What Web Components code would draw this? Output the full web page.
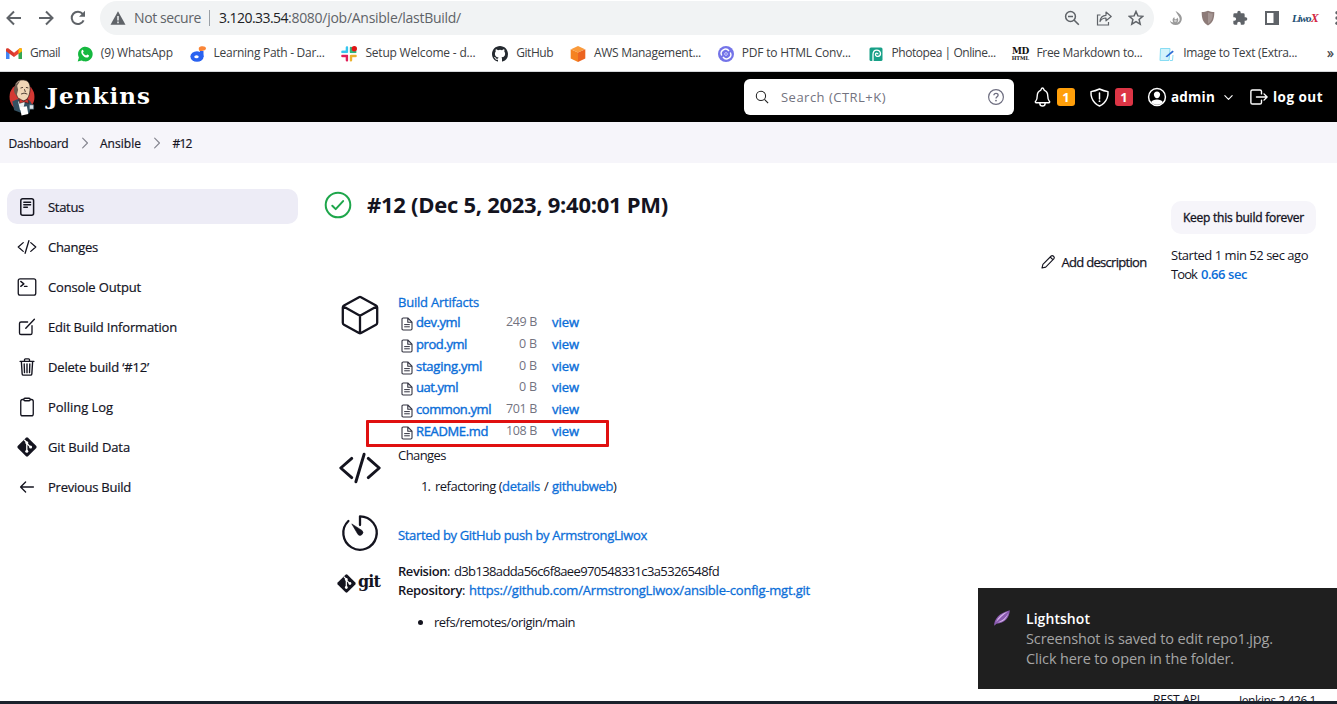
<!DOCTYPE html>
<html lang="en">
<head>
<meta charset="utf-8">
<title>Ansible #12 [Jenkins]</title>
<style>
html,body{margin:0;height:704px;overflow:hidden;background:#fff}
body{font:13px/20px "Open Sans","Noto Sans",sans-serif;color:#14141f}
</style>
</head>
<body>
<build-page></build-page>
<script>
const ICONS = {
back:['0 0 16 16','<path d="M15 8H2M8 1.5 1.5 8 8 14.5" fill="none" stroke="currentColor" stroke-width="2"/>'],
fwd:['0 0 16 16','<path d="M1 8h13M8 1.5 14.500 8 8 14.5" fill="none" stroke="currentColor" stroke-width="2"/>'],
reload:['0 0 16 16','<path d="M13.600 10.300A6.200 6.200 0 1 1 12.700 3.900L14 5.200" fill="none" stroke="currentColor" stroke-width="2"/><path d="M15 .8v6H9z" fill="currentColor"/>'],
warn:['0 0 16 16','<path d="M8 1.200 15.500 14.800H.5z" fill="currentColor"/><path d="M8 6v4.500M8 11.600v1.600" stroke="#f1f3f4" stroke-width="1.500"/>'],
zoomout:['0 0 16 16','<circle cx="6.500" cy="6.500" r="4.900" fill="none" stroke="currentColor" stroke-width="1.500"/><path d="M4 6.500h5M10 10l4.800 4.800" stroke="currentColor" stroke-width="1.600"/>'],
share:['0 0 16 16','<path d="M4.500 5H1.500v10h11v-3" fill="none" stroke="currentColor" stroke-width="1.200"/><path d="M4 11.500c.4-4.200 2.600-6 6-6.200V2L15.200 6.500 10 10.800V8C7.200 8 5.400 9 4 11.500z" fill="none" stroke="currentColor" stroke-width="1.200" stroke-linejoin="round"/>'],
star:['0 0 16 16','<path d="m8 1.500 1.900 4.400 4.800.4-3.600 3.200 1.100 4.700L8 11.700l-4.200 2.500 1.100-4.700L1.300 6.300l4.800-.4z" fill="none" stroke="currentColor" stroke-width="1.500"/>'],
flame:['0 0 16 16','<path d="M7.500 1c4 2 7.200 5 6.200 9-.7 3-3 5-6 5C4.500 15 2.200 13 1.800 10.200c1 1.500 2.200 2.200 3.500 2.300C4 10 4.500 8 6.500 7c-.3 1.200 0 2 1 2.200 1 .1 1.600-.7 1.500-1.700 2 1.500 1.600 4.500-.5 5.300 3-.4 3.600-2.800 2.900-5C10.700 5.500 9 4 7.500 1z" fill="#9a9a9a"/><circle cx="7.400" cy="10.800" r="1.400" fill="#ccc"/>'],
shieldx:['0 0 16 16','<path d="M8 .8c2 .9 4 1.200 6.300 1.200 0 6-1 10.500-6.300 13.500C2.700 12.500 1.700 8 1.700 2 4 2 6 1.700 8 .8z" fill="#8d7b78"/><path d="M8 2.500c1.500.6 3 1 4.800 1-.1 5-1.300 8-4.800 10.300z" fill="#a59693"/>'],
puzzle:['0 0 24 24','<path d="M20.500 11H19V7a2 2 0 0 0-2-2h-4V3.500a2.500 2.500 0 0 0-5 0V5H4a2 2 0 0 0-2 2v3.800h1.500a2.700 2.700 0 0 1 0 5.400H2V20c0 1.100.9 2 2 2h3.800v-1.500a2.700 2.700 0 0 1 5.400 0V22H17a2 2 0 0 0 2-2v-4h1.500a2.500 2.500 0 0 0 0-5z" fill="currentColor"/>'],
panel:['0 0 16 16','<path d="M1 1h14v14H1zM3 3v10h6.500V3z" fill="currentColor" fill-rule="evenodd"/>'],
dots:['0 0 4 16','<circle cx="2" cy="2.800" r="1.700" fill="currentColor"/><circle cx="2" cy="8" r="1.700" fill="currentColor"/><circle cx="2" cy="13.200" r="1.700" fill="currentColor"/>'],
gmail:['0 0 16 12','<path d="M0 1.500V11h3.500V4z" fill="#4285f4"/><path d="M16 1.500V11h-3.500V4z" fill="#34a853"/><path d="M0 1.500C0 .3 1.500-.3 2.600.6L8 4.700V9L0 3.200z" fill="#d93a2e"/><path d="M16 1.500c0-1.200-1.500-1.800-2.600-.9L8 4.700V9l8-5.800z" fill="#ea4335"/><path d="M12.500 1.300 13.400.6C14.500-.3 16 .3 16 1.500v1.700l-3.500 2.500z" fill="#fbbc04"/>'],
whatsapp:['0 0 16 16','<path d="M.7 15.500 1.900 11.500A7.300 7.300 0 1 1 4.700 14.400z" fill="#15b83f"/><path d="M5.100 4c.6-.4 1 0 1.500 1.300.2.600-.5 1-.6 1.400.7 1.400 1.700 2.300 3.100 2.800.4-.1.800-1 1.200-.9 1.700.7 1.900.9 1.600 1.700-.8 2-3.700 1.400-5.500-.3C4.500 8.400 3.500 5.500 5.100 4z" fill="#fff"/>'],
dare:['0 0 16 16','<ellipse cx="7" cy="10.500" rx="6.600" ry="5.300" fill="#2a62f0"/><path d="M10 5h3.500v6H10z" fill="#2a62f0"/><ellipse cx="6.500" cy="10.700" rx="2.200" ry="1.500" fill="#fff"/><path d="M9 1.500C10.500-.5 16-.3 16 2.200S12 5 10 5C8.800 4.600 8.500 2.500 9 1.500z" fill="#fa8638"/>'],
slack:['0 0 16 16','<g stroke-width="2.600" stroke-linecap="round"><path d="M6 1.500v4.300M1.500 5.900H5.500" stroke="#36c5f0"/><path d="M9.900 5.900h4.300M9.900 2v4" stroke="#2eb67d"/><path d="M1.500 9.900H5M6 9.900v4.300" stroke="#e01e5a"/><path d="M10.500 9.900h4M9.900 10v4.200" stroke="#ecb22e"/></g><path d="M0 7.900h16M7.950 0v16" stroke="#fff" stroke-width="1.200"/><path d="M0 3.800h4M12 12.100h4M3.700 12.200H0" stroke="#fff" stroke-width=".5"/><circle cx="13.300" cy="2.700" r="2.700" fill="#e01515"/>'],
github:['0 0 16 16','<path fill="#24292f" d="M8 0C3.580 0 0 3.580 0 8c0 3.540 2.290 6.530 5.470 7.590.4.070.55-.17.55-.38 0-.19-.01-.82-.01-1.490-2.010.37-2.530-.49-2.690-.94-.09-.23-.48-.94-.82-1.130-.28-.15-.68-.52-.01-.53.630-.01 1.080.58 1.230.82.720 1.210 1.870.87 2.330.66.070-.52.280-.87.510-1.070-1.780-.2-3.640-.89-3.640-3.950 0-.87.310-1.590.82-2.150-.08-.2-.36-1.020.08-2.120 0 0 .67-.21 2.200.82a7.600 7.600 0 0 1 4 0c1.530-1.040 2.200-.82 2.200-.82.440 1.100.16 1.920.08 2.120.51.560.82 1.270.82 2.150 0 3.070-1.870 3.750-3.650 3.950.29.250.54.730.54 1.480 0 1.070-.01 1.930-.01 2.200 0 .21.150.46.550.38A8 8 0 0 0 16 8c0-4.420-3.580-8-8-8z"/>'],
aws:['0 0 16 16','<path d="M8 0 15 3.200 8 6.500 1 3.200z" fill="#fa9a3a"/><path d="M.7 3.200 8 6.500V16L.7 12.500z" fill="#f58220"/><path d="M15.300 3.200 8 6.500V16l7.300-3.500z" fill="#ec6420"/>'],
pdf:['0 0 16 16','<circle cx="8" cy="8" r="8" fill="#7474e8"/><path d="M3.700 9.500A4.300 4.300 0 0 1 11 5M12.300 6.500A4.300 4.300 0 0 1 5 11" fill="none" stroke="#fff" stroke-width="1.400"/><circle cx="8" cy="8" r="1.400" fill="none" stroke="#c9c9fa" stroke-width="1"/>'],
pea:['0 0 16 16','<rect x="1.500" y="1.500" width="13" height="13.500" rx="1.500" fill="#18a087"/><path d="M5 15V8.500C5 2.500 12.500 3 12.500 7.600c0 3.600-5 3.600-5 .8 0-1.700 2.400-1.700 2.400-.1" fill="none" stroke="#fff" stroke-width="1.300"/>'],
note:['0 0 16 16','<path d="M1.500 2.500h9.500l-1 12H1z" fill="#d3f3fb" stroke="#87dcf3" stroke-width="1"/><path d="M11 14.500h2.500L14 9" fill="none" stroke="#87dcf3"/><path d="M6.500 10.500 13.500 4.500l1.300 1.200-6.800 5.500z" fill="#2c6bd4"/>'],
search:['0 0 16 16','<circle cx="6.800" cy="6.800" r="5.300" fill="none" stroke="#222" stroke-width="1.200"/><path d="m10.800 10.800 4.200 4.200" stroke="#222" stroke-width="1.300"/>'],
help:['0 0 16 16','<circle cx="8" cy="8" r="7.400" fill="none" stroke="#6e6e80" stroke-width="1.200"/><path d="M5.900 6.200C6 3.600 10.200 3.700 10.100 6.200c0 1.500-2.100 1.600-2.100 3.300" fill="none" stroke="#6e6e80" stroke-width="1.300"/><circle cx="8" cy="11.600" r=".9" fill="#6e6e80"/>'],
bell:['0 0 512 512','<path d="M427.700 351.400C404 322 383.900 307.800 383.900 213 383.900 126 340 95 303.700 80c-4.800-2-9.300-6.500-10.800-11.500C286.500 46.800 268.600 24 256 24s-30.500 22.800-36.900 44.500c-1.500 5-6 9.600-10.800 11.500C172 95 128 126 128 213c0 94.900-20 109.200-43.700 138.400C74.500 363.500 83.200 384 100.400 384h311.300c17.100 0 25.700-20.600 16-32.600zM320 384v16a64 64 0 0 1-128 0v-16" fill="none" stroke="currentColor" stroke-linecap="round" stroke-linejoin="round" stroke-width="34"/>'],
shield:['0 0 512 512','<path d="M463.100 112.400C373.700 96.700 336.700 84.500 256 48c-80.700 36.500-117.700 48.700-207.100 64.400C32.700 369.100 240.600 457.800 256 464c15.400-6.200 223.300-94.900 207.100-351.600zM256 144v146" fill="none" stroke="currentColor" stroke-linecap="round" stroke-linejoin="round" stroke-width="36"/><circle cx="256" cy="345" r="23" fill="currentColor"/>'],
user:['0 0 512 512','<circle cx="256" cy="256" r="216" fill="none" stroke="currentColor" stroke-width="38"/><path d="M256 115c-48 0-84 36-80 86 4 49 40 88 80 88s76-39 80-88c4-51-32-86-80-86zM105 390c40-95 262-95 302 0-70 82-232 82-302 0z" fill="currentColor"/>'],
chevd:['0 0 512 512','<path d="m112 184 144 144 144-144" fill="none" stroke="currentColor" stroke-linecap="round" stroke-linejoin="round" stroke-width="44"/>'],
chevr:['0 0 512 512','<path d="m170 80 176 176-176 176" fill="none" stroke="currentColor" stroke-linecap="round" stroke-linejoin="round" stroke-width="42"/>'],
logout:['0 0 512 512','<path d="M320 176v-60a40 40 0 0 0-40-40H88a40 40 0 0 0-40 40v280a40 40 0 0 0 40 40h192a40 40 0 0 0 40-40v-60M384 176l80 80-80 80M191 256h273" fill="none" stroke="currentColor" stroke-linecap="round" stroke-linejoin="round" stroke-width="36"/>'],
status:['0 0 20 20','<rect x="3.800" y="1.800" width="12.800" height="16.500" rx="2" fill="none" stroke="currentColor" stroke-width="1.500"/><path d="M6.800 5.200h6.800M6.800 7.700h6.800M6.800 10.200h3.600" stroke="currentColor" stroke-width="1.400" stroke-linecap="round"/>'],
code:['0 0 512 512','<path d="M160 368 32 256l128-112M352 368l128-112-128-112M304 96l-96 320" fill="none" stroke="currentColor" stroke-linecap="round" stroke-linejoin="round" stroke-width="34"/>'],
term:['0 0 512 512','<rect x="32" y="48" width="448" height="416" rx="48" fill="none" stroke="currentColor" stroke-width="34"/><path d="m96 112 80 64-80 64M192 240h64" fill="none" stroke="currentColor" stroke-linecap="round" stroke-linejoin="round" stroke-width="34"/>'],
edit:['0 0 512 512','<path d="M384 224v184a40 40 0 0 1-40 40H104a40 40 0 0 1-40-40V168a40 40 0 0 1 40-40h167.500" fill="none" stroke="currentColor" stroke-linecap="round" stroke-linejoin="round" stroke-width="34"/><path d="m225 287 220-228" stroke="currentColor" stroke-linecap="round" stroke-width="36"/>'],
trash:['0 0 512 512','<path d="m112 112 20 320c1 18.500 14.400 32 32 32h184c17.700 0 30.900-13.500 32-32l20-320M80 112h352M192 112V72c0-13 10-24 24-24h80c14 0 24 11 24 24v40M256 176v224M184 176l8 224M328 176l-8 224" fill="none" stroke="currentColor" stroke-linecap="round" stroke-linejoin="round" stroke-width="35"/>'],
clip:['0 0 512 512','<path d="M336 64h32a48 48 0 0 1 48 48v320a48 48 0 0 1-48 48H144a48 48 0 0 1-48-48V112a48 48 0 0 1 48-48h32" fill="none" stroke="currentColor" stroke-linejoin="round" stroke-width="34"/><rect x="176" y="32" width="160" height="64" rx="26" fill="none" stroke="currentColor" stroke-width="34"/>'],
git:['0 0 20 20','<path d="M9 .7Q10 0 11 .7L19.300 9q.7 1 0 2L11 19.300q-1 .7-2 0L.7 11Q0 10 .7 9z" fill="currentColor"/><path d="M7.200 2.800 9.800 5.600V14M10 6.500l3.500 3.600" fill="none" stroke="#fff" stroke-width="1.300"/><circle cx="9.800" cy="5.800" r="1.500" fill="#fff"/><circle cx="9.800" cy="14.200" r="1.500" fill="#fff"/><circle cx="13.600" cy="10" r="1.500" fill="#fff"/>'],
left:['0 0 512 512','<path d="M220 128 92 256l128 128M104 256h316" fill="none" stroke="currentColor" stroke-linecap="round" stroke-linejoin="round" stroke-width="34"/>'],
ok:['0 0 28 28','<circle cx="14" cy="14" r="12.300" fill="none" stroke="#1ea64b" stroke-width="2"/><path d="m8.300 14.700 3.400 3.400 7.400-8" fill="none" stroke="#1ea64b" stroke-width="2" stroke-linecap="round" stroke-linejoin="round"/>'],
pencil:['0 0 16 16','<path d="M2 14l.9-3.700L11.200 2c1.300-1.300 4 1 2.800 2.700l-8.300 8.400zM10.200 3l2.900 2.900" fill="none" stroke="currentColor" stroke-width="1.100" stroke-linejoin="round"/>'],
cube:['0 0 40 40','<path d="M19 2.200q1-.5 2 0l15 8.300q1.200.7 1.200 2v15.200q0 1.300-1.200 2l-15 8.300q-1 .5-2 0L4 29.700q-1.200-.7-1.200-2V12.500q0-1.300 1.200-2zM3.500 11.500 20 20.700l16.500-9.200M20 20.700V38" fill="none" stroke="currentColor" stroke-width="2.300" stroke-linejoin="round"/>'],
doc:['0 0 12 14','<path d="M1 2.200Q1 1 2.200 1h4.600L11 5.200v6.600q0 1.200-1.200 1.200H2.200Q1 13 1 11.800zM6.800 1v4.200H11" fill="none" stroke="#333340" stroke-width="1.100" stroke-linejoin="round"/><path d="M3.200 7.600h5.600M3.200 9.800h5.600" stroke="#333340" stroke-width="1"/>'],
timer:['0 0 40 40','<path d="M20 12V3.300A16.700 16.700 0 1 1 8.400 8" fill="none" stroke="currentColor" stroke-width="2.300" stroke-linecap="round" stroke-linejoin="round"/><path d="M11.800 10.900 22 17.500a2.800 2.800 0 1 1-4 4z" fill="currentColor" stroke="currentColor" stroke-width=".6" stroke-linejoin="round"/>'],
feather:['0 0 18 18','<path d="M1.200 16.800C1 10 6 4 16.800 1.200 16.500 9 11.500 14 3.500 14.800z" fill="#8a5bb0"/><path d="M3 13C5 8 9 4.500 15 2.500 10 6 7 9 3 13zM4.500 13.500C9 12 13 8.500 15.500 4 13.500 10 10 13.200 4.500 13.500z" fill="#d9b6ec"/>'],
jenkins:['0 0 28 38','<ellipse cx="14" cy="18.500" rx="12.800" ry="14" fill="#d33833"/><path d="M4 23Q12 18 22 22l3.500 6-3 3-1 4Q14 36 6 32z" fill="#335061"/><path d="M10 23h7l-2 9h-3z" fill="#eef1f2"/><path d="M7 8C7 2.500 11 .8 15.500 1c5 .3 7 4 6.800 9-.2 6-2 11-6 12.500-4 .5-6.500-2.500-7.800-6z" fill="#f0d6b7" stroke="#2a2020" stroke-width=".7"/><path d="M7 7C4.500 10 6 15.500 8.500 17L10 11 9 7l3-5Q8.500 3 7 7z" fill="#6c5a4f"/><path d="M12.500 9.300 15 8.600M18 8.600l2.500.6M13 15.500q3-2 6.500 0M16.500 10.500l1 3" fill="none" stroke="#3a2a25" stroke-width=".9"/><path d="m11 20 4.500 2.500L20 20.500l1 4.500-5-1.500-4.500 1.500z" fill="#d33833" stroke="#20100f" stroke-width=".5"/><path d="M12 29l7-1 1.500 8-7 1.500z" fill="#fff"/><path d="M21.500 26.500h4.500v4.500h-4.500z" fill="#dce4e8" stroke="#335061" stroke-width=".6"/>']
};

/* <ui-icon name size h>: one vector glyph */
customElements.define('ui-icon', class extends HTMLElement {
  connectedCallback() {
    if (this.shadowRoot) return;
    const [vb, body] = ICONS[this.getAttribute('name')];
    const w = this.getAttribute('size') || 16, h = this.getAttribute('h') || w;
    this.attachShadow({mode:'open'}).innerHTML =
      `<style>:host{display:inline-flex;flex:none}svg{display:block}</style><svg width="${w}" height="${h}" viewBox="${vb}">${body}</svg>`;
  }
});

class Base extends HTMLElement {
  connectedCallback() {
    if (this.shadowRoot) return;
    const t = document.createElement('template');
    t.innerHTML = '<style>*{box-sizing:border-box}' + this.css + '</style>' + this.view();
    this.attachShadow({mode:'open'}).append(document.importNode(t.content, true));
  }
}

customElements.define('browser-bar', class extends Base {
  css = `:host{display:block;height:72px;flex:none;background:#fff;color:#5f6368;border-bottom:1px solid #d5d7da;box-sizing:border-box;overflow:hidden;font-family:"Open Sans",sans-serif}
  .tools{display:flex;align-items:center;height:36px;padding-left:6px;width:1345px}
  .nav{display:flex;gap:16px;width:94px}
  .omni{display:flex;align-items:center;width:1054px;height:34px;border-radius:17px;background:#f1f3f4;padding:0 10px 0 10px;font-size:14px}
  .sep{width:1px;height:16px;background:#9aa0a6;margin:0 9px 0 8px}
  .host{color:#202124}.acts{margin-left:auto;display:flex;gap:16px}
  .ext{display:flex;align-items:center;gap:16px;margin-left:14px}
  .lx{font:italic bold 11px/16px "Liberation Serif",serif;color:#1c4f73;width:24px;margin:0 -4px;letter-spacing:-1px}.lx b{color:#d32440;font-size:12px}
  .marks{display:flex;align-items:center;height:35px;padding-left:6px;gap:16.800px;font-size:12px;color:#3c4043}
  .m{display:flex;align-items:center;gap:8px;flex:none}.m ui-text,.more{margin-top:-2px}
  .more{margin-left:13px;font-size:14px;-webkit-text-stroke:.3px}
  .md{width:16px;display:flex;flex-direction:column;align-items:center;color:#111;font:900 9px/8px "DejaVu Serif",serif;letter-spacing:-.5px}.md small{font:bold 5px/6px "DejaVu Serif",serif;letter-spacing:0}`;
  view() {
    const m = [['gmail','Gmail',30],['whatsapp','(9) WhatsApp',72],['dare','Learning Path - Dar...',111],['slack','Setup Welcome - d...',110],['github','GitHub',37],['aws','AWS Management...',107],['pdf','PDF to HTML Conv...',109],['pea','Photopea | Online...',104],['','Free Markdown to...',106],['note','Image to Text (Extra...',114]];
    return `<div class="tools"><div class="nav"><ui-icon name="back"></ui-icon><ui-icon name="fwd"></ui-icon><ui-icon name="reload"></ui-icon></div>
    <div class="omni"><ui-icon name="warn"></ui-icon><ui-text w="67" style="margin-left:8px">Not secure</ui-text><span class="sep"></span><ui-text class="host" w="69">3.120.33.54</ui-text><ui-text w="173">:8080/job/Ansible/lastBuild/</ui-text>
    <span class="acts"><ui-icon name="zoomout"></ui-icon><ui-icon name="share"></ui-icon><ui-icon name="star"></ui-icon></span></div>
    <div class="ext"><ui-icon name="flame"></ui-icon><ui-icon name="shieldx"></ui-icon><ui-icon name="puzzle"></ui-icon><ui-icon name="panel"></ui-icon><span class="lx">Liwo<b>X</b></span><ui-icon name="dots" size="4" h="16" style="margin-left:7px"></ui-icon></div></div>
    <div class="marks">${m.map(([i,t,w]) => `<span class="m">${i ? `<ui-icon name="${i}" ${i=='gmail'?'size="16" h="12"':''}></ui-icon>` : '<span class="md">MD<small>HTML</small></span>'}<ui-text w="${w}">${t}</ui-text></span>`).join('')}<span class="more">»</span></div>`;
  }
});

customElements.define('jenkins-header', class extends Base {
  css = `:host{display:flex;align-items:center;height:50px;flex:none;background:#000;color:#fff;padding-left:8px}
  .logo{font:bold 23px/30px "DejaVu Serif",serif;margin-left:11px;margin-top:-3px}
  .search{display:flex;align-items:center;width:270px;height:36px;border-radius:6px;background:#fff;color:#737380;margin-left:593px;padding:0 10px 0 11px;font-size:13px}
  .search ui-icon:last-child{margin-left:auto}
  .badge{width:18px;height:18px;border-radius:3px;background:#ff9f0a;font-weight:700;font-size:13px;line-height:18px;text-align:center}
  .red{background:#dc3545}.b{font-weight:700;font-size:13.500px}`;
  view() { return `<ui-icon name="jenkins" size="28" h="37"></ui-icon><ui-text class="logo" w="104">Jenkins</ui-text>
    <div class="search"><ui-icon name="search" size="14"></ui-icon><ui-text w="105" style="margin-left:12px">Search (CTRL+K)</ui-text><ui-icon name="help" size="16"></ui-icon></div>
    <ui-icon name="bell" size="21" style="margin-left:18px"></ui-icon><span class="badge" style="margin-left:4px">1</span>
    <ui-icon name="shield" size="21" style="margin-left:14px"></ui-icon><span class="badge red" style="margin-left:5px">1</span>
    <ui-icon name="user" size="20" style="margin-left:14px"></ui-icon><ui-text class="b" w="44" style="margin-left:4px">admin</ui-text><ui-icon name="chevd" size="13" style="margin-left:7px"></ui-icon>
    <ui-icon name="logout" size="20" style="margin-left:14px"></ui-icon><ui-text class="b" w="50" style="margin-left:4px">log out</ui-text>`; }
});

customElements.define('bread-crumbs', class extends Base {
  css = `:host{display:flex;align-items:center;height:41px;flex:none;background:#f6f5fa;padding:1px 0 0 8.500px;box-sizing:border-box;font-size:12px;-webkit-text-stroke:.2px}
  ui-text{margin-top:1px}ui-icon{color:#85858f;margin:0 8.500px 0 9px}`;
  view() { return `<ui-text w="60">Dashboard</ui-text><ui-icon name="chevr" size="14"></ui-icon><ui-text w="41">Ansible</ui-text><ui-icon name="chevr" size="14"></ui-icon><ui-text w="19">#12</ui-text>`; }
});

customElements.define('side-task', class extends Base {
  css = `:host{display:flex;align-items:center;height:35px;border-radius:10px;padding-left:10px;font-size:13px;-webkit-text-stroke:.2px;box-sizing:border-box}
  :host([active]){background:#edecf6}ui-icon{margin-right:11px}slot{display:contents}.t{padding-top:1px}`;
  view() { return `<ui-icon name="${this.getAttribute('icon')}" size="20"></ui-icon><span class="t"><slot></slot></span>`; }
});

customElements.define('task-list', class extends Base {
  css = `:host{display:flex;flex-direction:column;gap:5px;width:298px;flex:none;padding:26px 0 0 7px;box-sizing:border-box}`;
  view() { return [['status','Status',36],['code','Changes',50],['term','Console Output',93],['edit','Edit Build Information',129],['trash','Delete build ‘#12’',101],['clip','Polling Log',65],['git','Git Build Data',82],['left','Previous Build',83]]
    .map(([i,t,w],n) => `<side-task icon="${i}" ${n?'':'active'}><ui-text w="${w}">${t}</ui-text></side-task>`).join(''); }
});

customElements.define('build-heading', class extends Base {
  css = `:host{display:flex;height:129px;padding-left:26px;box-sizing:border-box}
  ui-icon.ok{margin-top:28px}.title{font-size:22px;line-height:30px;font-weight:700;margin:26px 0 0 15px}
  .add{display:flex;align-items:center;height:20px;margin:89px 0 0 auto;-webkit-text-stroke:.25px}
  .meta{width:145px;margin:38px 21px 0 24.500px}
  .keep{height:33px;border-radius:10px;background:#f6f5fa;display:flex;align-items:center;justify-content:center;font-size:12px;-webkit-text-stroke:.35px;margin-bottom:12px}
  .l{display:flex;height:19px;line-height:19px}.a{color:#0b6ed8;font-weight:600}`;
  view() { return `<ui-icon class="ok" name="ok" size="28"></ui-icon><ui-text class="title" w="301">#12 (Dec 5, 2023, 9:40:01 PM)</ui-text>
    <div class="add"><ui-icon name="pencil" size="16"></ui-icon><ui-text w="85" style="margin-left:6px">Add description</ui-text></div>
    <div class="meta"><div class="keep"><ui-text w="121">Keep this build forever</ui-text></div>
    <div class="l"><ui-text w="137">Started 1 min 52 sec ago</ui-text></div><div class="l"><ui-text w="26">Took</ui-text><ui-text class="a" w="46" style="margin-left:4px">0.66 sec</ui-text></div></div>`; }
});

customElements.define('artifact-row', class extends Base {
  css = `:host{display:flex;align-items:center;height:21.670px;padding-left:3px}
  ui-icon{margin:3px 3px 0 0}ui-text{margin-top:-1px}.n,.v{color:#0b6ed8;-webkit-text-stroke:.4px}.s{width:121px;display:flex;justify-content:space-between;margin-right:15px;color:#73737f;font-size:12.500px}.n{font-size:13px}`;
  view() { const g = k => this.getAttribute(k);
    return `<ui-icon name="doc" size="12" h="14"></ui-icon><span class="s"><ui-text class="n" w="${g('nw')}">${g('file')}</ui-text><ui-text w="${g('sw')}">${g('size')}</ui-text></span><ui-text class="v" w="27">view</ui-text>`; }
});

customElements.define('build-summary', class extends Base {
  css = `:host{display:block;padding-left:38px;position:relative}
  section{display:grid;grid-template-columns:44px 1fr;column-gap:18px}
  section>ui-icon{justify-self:center;position:relative;left:1.500px}
  .a{color:#0b6ed8;-webkit-text-stroke:.3px}.l{display:flex;align-items:center}
  .mark{position:absolute;left:68px;top:128px;width:243px;height:27px;border:3px solid #e01010;border-radius:1px}
  .gi{display:flex;align-items:center;height:22px;padding-left:1px}.gi ui-text{font:bold 16px/20px "DejaVu Serif",serif;margin:-2px 0 0 2px}
  .dot{width:5px;height:5px;border-radius:50%;background:#14141f;margin:0 11px 0 20px}`;
  view() {
    const f = [['dev.yml',44,'249 B',31],['prod.yml',51,'0 B',18],['staging.yml',66,'0 B',18],['uat.yml',42,'0 B',18],['common.yml',75,'701 B',31],['README.md',72,'108 B',31]];
    return `<section style="height:150px"><ui-icon name="cube" size="40" style="margin-top:3px"></ui-icon><div><div class="l"><ui-text class="a" w="81">Build Artifacts</ui-text></div>
      ${f.map(a => `<artifact-row file="${a[0]}" nw="${a[1]}" size="${a[2]}" sw="${a[3]}"></artifact-row>`).join('')}</div></section>
    <section style="height:61px"><ui-icon name="code" size="44" style="margin-top:4px"></ui-icon><div><div class="l" style="height:26px"><ui-text w="48">Changes</ui-text></div>
      <div class="l" style="height:36px;padding-left:23px"><ui-text w="9">1.</ui-text><ui-text w="67" style="margin-left:5px">refactoring (</ui-text><ui-text class="a" w="38">details</ui-text><ui-text w="4" style="margin:0 4px">/</ui-text><ui-text class="a" w="61">githubweb</ui-text><ui-text w="4">)</ui-text></div></div></section>
    <section style="height:58px"><ui-icon name="timer" size="40" style="margin-top:10px"></ui-icon><div class="l" style="height:20px;margin-top:22px"><ui-text class="a" w="249">Started by GitHub push by ArmstrongLiwox</ui-text></div></section>
    <section><div class="gi" style="margin-top:11px"><ui-icon name="git" size="19"></ui-icon><ui-text w="22">git</ui-text></div><div>
      <div class="l" style="height:19px"><ui-text w="49" style="font-weight:600">Revision</ui-text><ui-text w="4">:</ui-text><ui-text w="265" style="margin-left:3px">d3b138adda56c6f8aee970548331c3a5326548fd</ui-text></div>
      <div class="l" style="height:19px"><ui-text w="64" style="font-weight:600">Repository</ui-text><ui-text w="4">:</ui-text><ui-text class="a" w="341" style="margin-left:3px">https://github.com/ArmstrongLiwox/ansible-config-mgt.git</ui-text></div>
      <div class="l" style="height:20px;margin-top:13px"><i class="dot"></i><ui-text w="141">refs/remotes/origin/main</ui-text></div></div></section>
    <div class="mark"></div>`;
  }
});

customElements.define('toast-card', class extends Base {
  css = `:host{position:absolute;left:978px;top:588px;width:359px;height:101px;background:#1f1f1f;color:#a5a5a5;display:flex;padding:21px 0 0 15px;box-sizing:border-box;font-size:14.500px}
  .t{display:flex;flex-direction:column;margin-left:15px}.h{color:#fff;font-weight:600;font-size:14px}`;
  view() { return `<ui-icon name="feather" size="18"></ui-icon><div class="t"><ui-text class="h" w="64">Lightshot</ui-text><ui-text w="247">Screenshot is saved to edit repo1.jpg.</ui-text><ui-text w="208">Click here to open in the folder.</ui-text></div>`; }
});

customElements.define('build-page', class extends Base {
  css = `:host{display:flex;flex-direction:column;width:1337px;height:704px;overflow:hidden;position:relative}
  main{display:flex;height:527px;flex:none}.c{flex:1}
  footer{display:flex;height:11px;overflow:hidden;padding-left:1153px;font-size:12px;flex:none}
  .task{height:3px;flex:none;background:#1b222c}`;
  view() { return `<browser-bar></browser-bar><jenkins-header></jenkins-header><bread-crumbs></bread-crumbs>
    <main><task-list></task-list><div class="c"><build-heading></build-heading><build-summary></build-summary></div></main>
    <footer><ui-text w="47">REST API</ui-text><ui-text w="77" style="margin:1px 0 0 39px">Jenkins 2.426.1</ui-text></footer><div class="task"></div><toast-card></toast-card>`; }
});

/* <ui-text w>: a run of text tracked to fill a set measure */
customElements.define('ui-text', class extends HTMLElement {
  connectedCallback() {
    if (this.shadowRoot) return;
    this.attachShadow({mode:'open'}).innerHTML = `<style>:host{display:block;flex:none;white-space:pre;width:${this.getAttribute('w')}px}span{display:inline-block}</style><span><slot></slot></span>`;
    requestAnimationFrame(() => this.fit()); this.fit();
  }
  fit() {
    const s = this.shadowRoot.querySelector('span'), n = this.textContent.length;
    s.style.letterSpacing = '0px';
    const d = this.getAttribute('w') - s.getBoundingClientRect().width;
    s.style.letterSpacing = (d / n).toFixed(3) + 'px';
  }
});
</script>
</body>
</html>
